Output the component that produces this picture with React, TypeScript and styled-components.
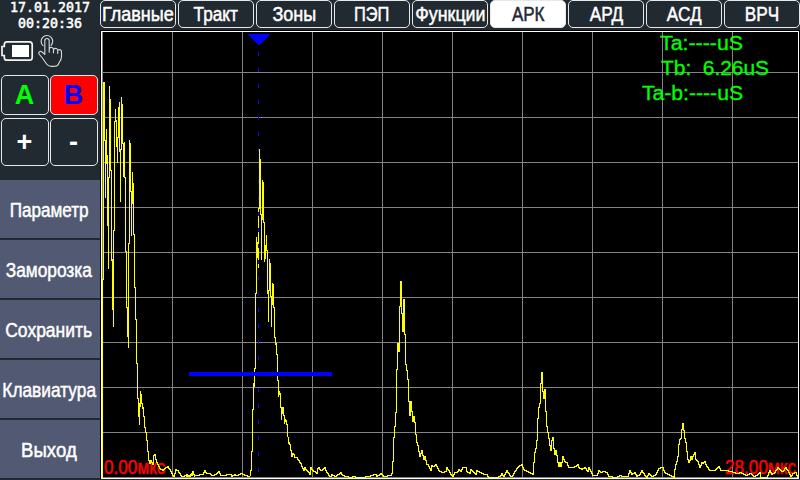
import React from "react";
import styled, { createGlobalStyle } from "styled-components";

const GlobalStyle = createGlobalStyle`
  * { box-sizing: border-box; }
  html, body { margin: 0; padding: 0; background: #222a31; overflow: hidden; }
`;

const SANS = '"Liberation Sans", Arial, sans-serif';
const BASE = "#222a31";

const Screen = styled.div`
  width: 800px;
  height: 480px;
  display: grid;
  grid-template-columns: 100px 700px;
  background: ${BASE};
  color: #fff;
  font-family: ${SANS};
  overflow: hidden;
`;

const Sidebar = styled.aside`
  display: flex;
  flex-direction: column;
  height: 480px;
`;

const Clock = styled.div`
  height: 38px;
  font: 13.3px/16px "DejaVu Sans Mono", monospace;
  text-align: center;
  white-space: pre;
  -webkit-text-stroke: 0.5px #fff;
`;

const StatusIcons = styled.div`
  height: 37px;
  display: flex;
  svg { display: block; }
`;

const KeyPad = styled.div`
  display: grid;
  grid-template-columns: 48px 48px;
  grid-template-rows: 40px 48px;
  gap: 3px 1px;
  padding-left: 1px;
  height: 105px;
`;

const Key = styled.button<{ $ink?: string; $fill?: string }>`
  display: flex;
  align-items: center;
  justify-content: center;
  padding: 0 1px 0 0;
  border: 1px solid #e6e8ea;
  border-radius: 5px;
  background: ${(p) => p.$fill ?? BASE};
  color: ${(p) => p.$ink ?? "#fff"};
  font: bold 27px/1 ${SANS};
`;

const Menu = styled.nav`
  display: flex;
  flex-direction: column;
  gap: 2px;
`;

const MenuItem = styled.button`
  display: flex;
  align-items: center;
  justify-content: center;
  width: 100px;
  height: 58px;
  padding: 2px 2px 0 0;
  border: 0;
  background: #525972;
  color: #fff;
  font: 20px/1 ${SANS};
`;

const Label = styled.span<{ $stretch: number }>`
  display: inline-block;
  white-space: nowrap;
  transform: scaleX(${(p) => p.$stretch});
  -webkit-text-stroke: 0.5px currentColor;
`;

const Main = styled.main`
  display: flex;
  flex-direction: column;
`;

const Tabs = styled.div`
  display: flex;
  gap: 2px;
  height: 30px;
`;

const Tab = styled.button<{ $active?: boolean }>`
  display: flex;
  align-items: center;
  justify-content: center;
  flex: 0 0 76px;
  min-width: 0;
  height: 28px;
  padding: 0;
  border: 1px solid #e6e8ea;
  border-radius: 5px;
  background: ${(p) => (p.$active ? "#fff" : BASE)};
  color: ${(p) => (p.$active ? BASE : "#fff")};
  font: 20px/1 ${SANS};
`;

const Plot = styled.svg`
  display: block;
  background: #000;
  font-family: ${SANS};
`;

const MENU: [string, number][] = [
  ["Параметр", 0.855],
  ["Заморозка", 0.865],
  ["Сохранить", 0.875],
  ["Клавиатура", 0.865],
  ["Выход", 0.93],
];

const TABS: [string, number][] = [
  ["Главные", 0.9],
  ["Тракт", 0.86],
  ["Зоны", 0.9],
  ["ПЭП", 0.82],
  ["Функции", 0.89],
  ["АРК", 0.85],
  ["АРД", 0.86],
  ["АСД", 0.86],
  ["ВРЧ", 0.86],
];

type Pair = [number, number];

/* Signal envelope, one [top, bottom] range per column. */
const BURST: Pair[] = [
  [279, 477], [82, 279], [82, 140], [140, 197], [129, 163], [155, 225], [177, 268], [86, 177], [99, 170],
  [170, 260], [259, 309], [230, 326], [121, 230], [109, 121], [120, 146], [137, 162], [107, 137], [102, 151],
  [149, 201], [97, 149], [104, 143], [143, 176], [142, 177], [177, 251], [251, 307], [307, 336], [243, 347],
  [140, 243], [143, 191], [191, 235], [172, 203], [183, 234], [234, 287], [287, 319], [319, 363], [363, 398],
  [398, 416], [403, 424], [391, 406], [394, 403], [403, 408], [407, 416], [416, 427], [427, 432], [432, 440],
  [440, 451], [451, 460],
];

const ECHO: Pair[] = [
  [470, 475], [451, 470], [409, 451], [383, 409], [368, 386], [293, 368], [237, 293], [242, 257], [208, 267],
  [149, 208], [159, 214], [214, 259], [180, 219], [182, 222], [222, 261], [245, 258], [235, 250], [250, 293],
  [290, 321], [259, 290], [263, 296], [296, 326], [283, 304], [284, 307], [307, 337], [337, 344], [343, 354],
  [354, 380], [380, 396], [391, 394], [393, 407], [407, 419], [407, 413], [407, 415], [415, 423], [419, 421],
  [420, 424], [424, 436], [437, 443], [442, 444], [444, 450], [450, 456],
];

/* Sparse samples, in thirds of a pixel relative to each section's origin. */
const section = (ox: number, oy: number, flat: number[]): Pair[] => {
  const out: Pair[] = [];
  for (let i = 0; i < flat.length; i += 2) {
    out.push([ox + Math.floor(flat[i] / 3), oy + Math.floor(flat[i + 1] / 3)]);
  }
  return out;
};

const NOISE_A = [
  ...section(98, 260, [
    150, 602, 153, 610, 158, 602, 162, 612, 166, 585, 169, 583, 173, 597, 178, 612, 183, 625, 192, 632, 198, 625,
    208, 618, 214, 628, 220, 640, 225, 648, 232, 627, 238, 632, 245, 640, 250, 648, 262, 646, 275, 649, 284, 635,
    288, 648,
  ]),
  ...section(180, 320, [
    16, 463, 25, 467, 33, 466, 38, 456, 42, 466, 68, 464, 73, 452, 78, 460, 88, 460, 95, 466, 105, 463, 115, 455,
    120, 466, 150, 463, 155, 468, 162, 462, 170, 467, 185, 460, 195, 466, 207, 468,
  ]),
];

const NOISE_B = [
  ...section(180, 320, [
    333, 408, 336, 401, 340, 403, 343, 413, 348, 413, 354, 420, 360, 430, 363, 440, 366, 446, 369, 452, 373, 443,
    378, 452, 384, 457, 388, 463, 392, 443, 396, 452, 402, 455, 408, 460, 413, 445, 416, 442, 420, 450, 425, 450,
    432, 442, 437, 452, 441, 460, 445, 467, 450, 470, 455, 463, 462, 470, 470, 465, 480, 458, 487, 467, 495, 470,
    510, 471, 520, 469, 530, 471,
  ]),
  ...section(360, 270, [
    0, 622, 25, 618, 32, 615, 45, 612, 50, 618, 62, 610, 70, 618, 90, 615, 93, 611, 97, 575, 100, 502, 103, 470,
    106, 428, 109, 298, 112, 219, 115, 245, 118, 109, 121, 34, 124, 130, 127, 185, 130, 88, 133, 193, 136, 283,
    139, 302, 142, 328, 145, 395, 148, 437, 151, 395, 154, 425, 157, 455, 160, 438, 163, 458, 166, 492, 169, 517,
    172, 527, 175, 545, 178, 560, 181, 550, 184, 541, 187, 555, 190, 568, 193, 559, 196, 570, 199, 583, 202, 583,
    205, 590, 208, 595, 211, 601, 215, 586, 220, 588, 225, 583, 230, 590, 235, 600, 245, 607, 255, 604, 260, 593,
    265, 601, 272, 612, 277, 618, 282, 608, 290, 606, 295, 598, 300, 603, 306, 592, 315, 592, 320, 603, 327, 611,
    332, 597, 340, 608, 345, 613, 350, 601, 357, 608, 362, 606, 370, 613, 378, 612, 385, 621, 408, 622, 415, 618,
    418, 618,
  ]),
  ...section(500, 360, [
    0, 346, 5, 341, 10, 348, 15, 338, 20, 332, 27, 345, 33, 350, 40, 341, 48, 326, 55, 320, 63, 313, 70, 328, 78,
    334, 88, 338, 97, 342, 100, 307, 103, 277, 105, 265, 109, 241, 112, 175, 115, 142, 117, 130, 121, 70, 124, 37,
    127, 95, 130, 115, 133, 88, 136, 154, 139, 199, 142, 217, 145, 235, 148, 255, 151, 271, 154, 241, 157, 232,
    160, 265, 163, 283, 166, 271, 169, 285, 172, 307, 175, 319, 178, 308, 181, 319, 184, 308, 187, 290, 193, 304,
    200, 308, 205, 322, 220, 322, 231, 313, 236, 322, 245, 328, 252, 322, 262, 335, 266, 322, 272, 335, 278, 346,
    288, 346, 295, 331, 302, 337, 310, 334, 320, 338, 326, 350, 350, 352, 358, 346, 368, 349, 382, 349, 388, 331,
    395, 343, 403, 338, 410, 348, 417, 344,
  ]),
  ...section(640, 400, [
    0, 217, 5, 211, 12, 226, 18, 232, 25, 220, 35, 229, 45, 224, 55, 205, 60, 202, 68, 203, 73, 218, 80, 220, 90,
    226, 100, 231, 103, 207, 106, 193, 109, 184, 112, 170, 115, 133, 118, 117, 121, 115, 124, 87, 127, 70, 130,
    92, 133, 115, 136, 127, 139, 155, 142, 178, 145, 187, 148, 180, 151, 170, 154, 178, 157, 168, 162, 157, 167,
    178, 172, 184, 178, 202, 183, 188, 188, 190, 194, 185, 200, 199, 207, 211, 222, 211, 235, 200, 242, 210, 255,
    212, 270, 214, 290, 219, 300, 217, 315, 225, 330, 221, 340, 229, 350, 225, 358, 218, 362, 232, 380, 233, 387,
    210, 393, 222, 402, 218, 413, 202, 420, 212, 428, 215, 436, 203, 444, 217, 452, 229, 458, 220, 465, 218, 473,
    232,
  ]),
];

const barsPath = (x0: number, bars: Pair[]) =>
  bars.map(([a, b], i) => `M${x0 + i + 0.5} ${a}V${b + 1}`).join("");

const stepPath = (pts: Pair[]) => {
  let d = "";
  let prev = pts[0][1];
  for (let i = 1; i < pts.length; i++) {
    const [xa, ya] = pts[i - 1];
    const [xb, yb] = pts[i];
    for (let x = xa + 1; x <= xb; x++) {
      const y = Math.round(ya + ((yb - ya) * (x - xa)) / (xb - xa));
      d += `M${x + 0.5} ${Math.min(prev, y)}V${Math.max(prev, y) + 1}`;
      prev = y;
    }
  }
  return d;
};

const TRACE = barsPath(102, BURST) + stepPath(NOISE_A) + barsPath(250, ECHO) + stepPath(NOISE_B);

const GRID_X = [102, 172, 242, 312, 382, 452, 522, 592, 662, 732];
const GRID_Y = [72, 117, 162, 207, 252, 297, 342, 387, 432, 477];
const GRID =
  GRID_X.map((x) => `M${x + 0.5} 32V478`).join("") + GRID_Y.map((y) => `M102 ${y + 0.5}H798`).join("");

const Scope = () => (
  <Plot width="700" height="450" viewBox="100 30 700 450">
    <path d="M100 479.5H800" stroke={BASE} />
    <g fill="none" shapeRendering="crispEdges">
      <path d={GRID} stroke="#848284" />
      <rect x="101.5" y="31.5" width="697" height="447" stroke="#fff" />
    </g>
    <g fill="#f00" stroke="#f00" strokeWidth="0.5" fontSize="19.5">
      <text transform="translate(104 474) scale(0.88 1)">0.00мкс</text>
      <text transform="translate(725 474) scale(0.88 1)">28.00мкс</text>
    </g>
    <g fill="none" shapeRendering="crispEdges">
      <path d={TRACE} stroke="#ff0" />
      <path d="M258.5 36V478" stroke="#00f" strokeDasharray="4 12" />
      <rect x="189" y="372" width="143" height="4" fill="#00f" />
      <path d="M247 34H270L259 45Z" fill="#00f" />
    </g>
    <g fill="#0f0" stroke="#0f0" strokeWidth="0.3" fontSize="20.5">
      <text x="660" y="50" textLength="83" lengthAdjust="spacingAndGlyphs">Ta:----uS</text>
      <text x="661" y="75" textLength="108" lengthAdjust="spacingAndGlyphs" xmlSpace="preserve">Tb:  6.26uS</text>
      <text x="642" y="100" textLength="101" lengthAdjust="spacingAndGlyphs">Ta-b:----uS</text>
    </g>
  </Plot>
);

const Battery = () => (
  <svg width="36" height="37" viewBox="0 38 36 37" fill="none">
    <path
      d="M7 41.8H29.5Q32.2 41.8 32.2 44.5V57.5Q32.2 60.2 29.5 60.2H7Q4.3 60.2 4.3 57.5V55.5H2V46.5H4.3V44.5Q4.3 41.8 7 41.8Z"
      stroke="#f4f4f4"
      strokeWidth="1.7"
    />
    <rect x="12" y="45" width="17" height="12" fill="#fff" />
  </svg>
);

const TouchHand = () => (
  <svg
    width="30"
    height="37"
    viewBox="36 38 30 37"
    overflow="visible"
    fill="none"
    stroke="#d4d7d9"
    strokeWidth="1.15"
    strokeLinejoin="round"
    strokeLinecap="round"
  >
    <path d="M43 45.6A5.8 5.8 0 1 1 51 45.4" />
    <path d="M44.8 54.4V40.8Q44.8 38.5 47 38.5Q49.2 38.5 49.2 40.8V48.6Q50.4 47 52 47.5Q53.4 48 53.5 49.4Q55 47.9 56.5 48.6Q57.6 49.1 57.7 50.4Q59.4 49 60.9 50.2Q61.6 50.9 61.5 52.4V56.4Q61.4 59.5 59.5 62L58.7 63.6Q58 66.2 54.4 66.3H50.6Q48.2 66.2 46.6 64L42.4 58L39 54Q38.3 52.2 39.7 51.5Q41.1 51 42.3 52.2L44.8 54.4M49.2 48.6V52.2M53.5 49.4V52.8M57.7 50.4V53.4" />
  </svg>
);

export default function App() {
  return (
    <>
      <GlobalStyle />
      <Screen>
        <Sidebar>
          <Clock>{"17.01.2017\n00:20:36"}</Clock>
          <StatusIcons>
            <Battery />
            <TouchHand />
          </StatusIcons>
          <KeyPad>
            <Key $ink="#0f0">A</Key>
            <Key $ink="#00f" $fill="#f00">B</Key>
            <Key>+</Key>
            <Key>-</Key>
          </KeyPad>
          <Menu>
            {MENU.map(([name, stretch]) => (
              <MenuItem key={name}>
                <Label $stretch={stretch}>{name}</Label>
              </MenuItem>
            ))}
          </Menu>
        </Sidebar>
        <Main>
          <Tabs>
            {TABS.map(([name, stretch]) => (
              <Tab key={name} $active={name === "АРК"}>
                <Label $stretch={stretch}>{name}</Label>
              </Tab>
            ))}
          </Tabs>
          <Scope />
        </Main>
      </Screen>
    </>
  );
}
